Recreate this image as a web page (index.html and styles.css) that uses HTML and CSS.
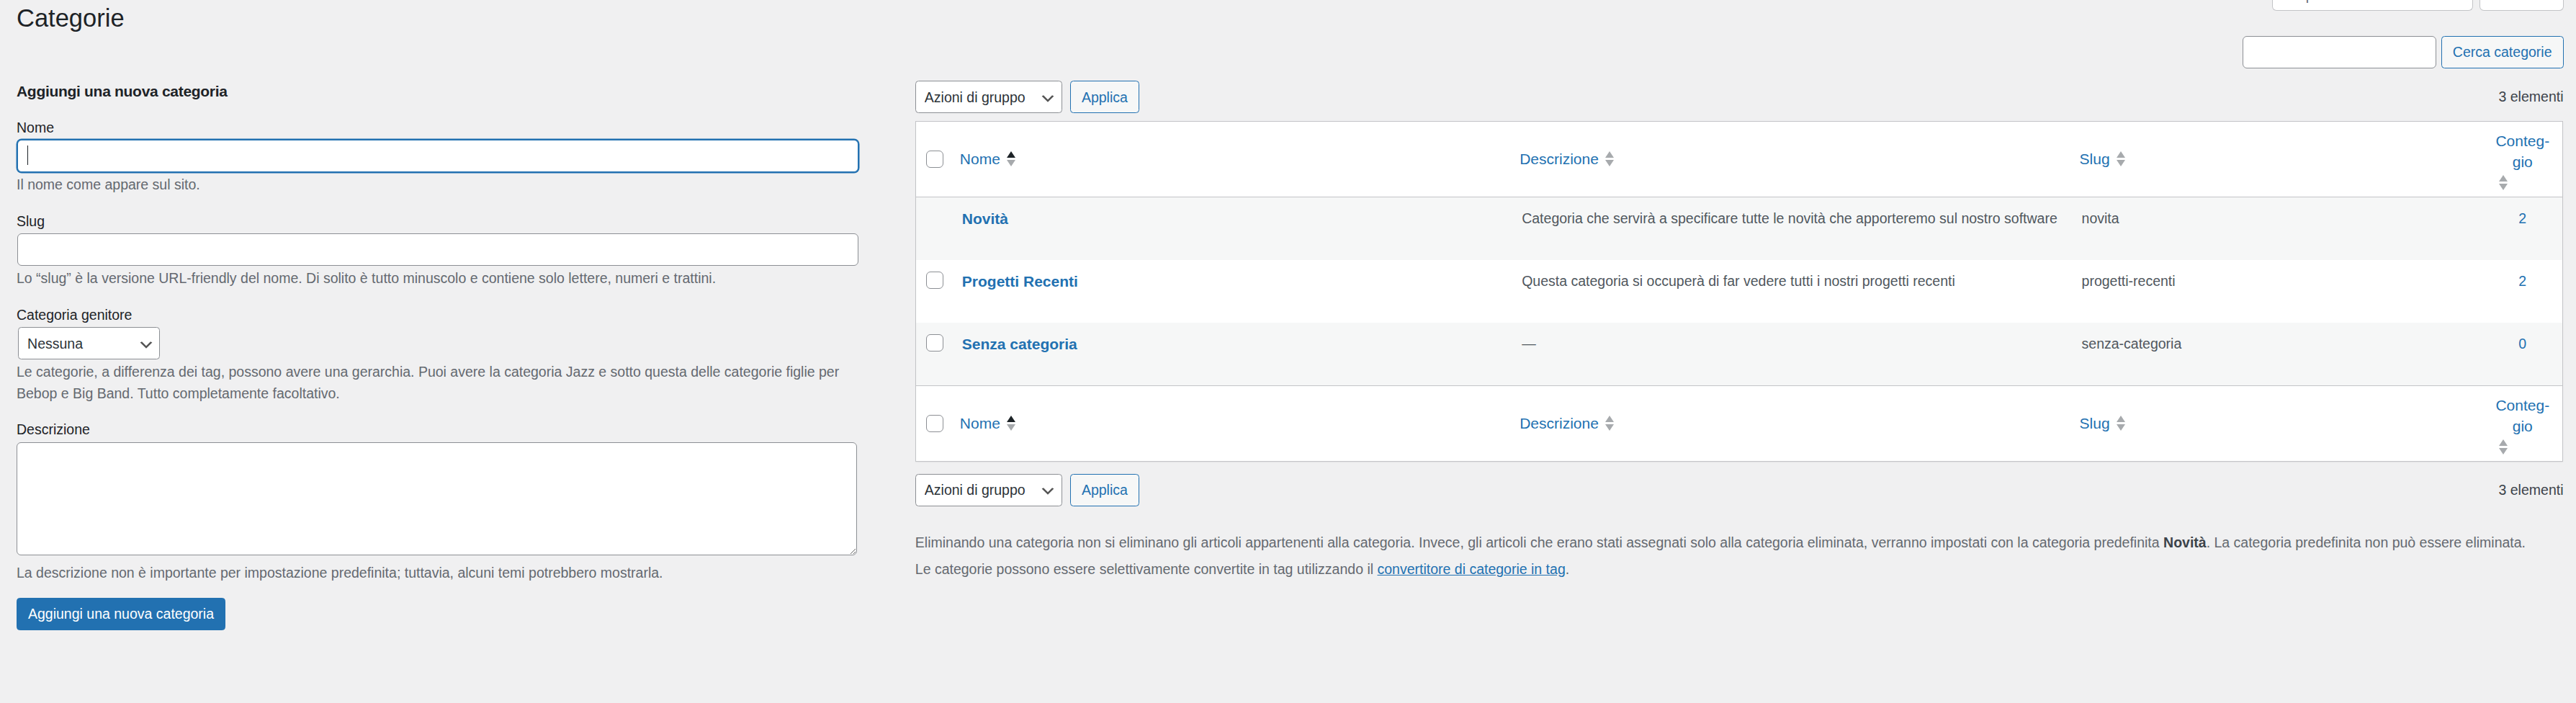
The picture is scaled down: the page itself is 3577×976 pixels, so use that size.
FILE: index.html
```html
<!DOCTYPE html>
<html lang="it">
<head>
<meta charset="utf-8">
<title>Categorie</title>
<link rel="stylesheet" href="styles.css">
</head>
<body>
<div class="wrap">
  <div class="topbar">
    <h1 class="page-title">Categorie</h1>
    <div class="screen-meta">
      <button class="meta-tab" type="button">Impostazioni schermata<span class="meta-arrow"><svg viewBox="0 0 20 20" width="20" height="20"><path d="M5 8l5 5 5-5z" fill="#787c82"/></svg></span></button>
      <button class="meta-tab" type="button">Aiuto<span class="meta-arrow"><svg viewBox="0 0 20 20" width="20" height="20"><path d="M5 8l5 5 5-5z" fill="#787c82"/></svg></span></button>
    </div>
  </div>

  <div class="search-box">
    <input class="text-input search-input" type="search" aria-label="Cerca categorie">
    <button class="btn btn-secondary" type="button">Cerca categorie</button>
  </div>

  <div class="cols">
    <div class="col-left">
      <h2 class="form-title">Aggiungi una nuova categoria</h2>

      <div class="form-field">
        <label class="field-label">Nome</label>
        <div class="field-control">
          <input class="text-input wide-input is-focused" type="text">
          <span class="caret"></span>
        </div>
        <p class="hint">Il nome come appare sul sito.</p>
      </div>

      <div class="form-field">
        <label class="field-label">Slug</label>
        <div class="field-control">
          <input class="text-input wide-input" type="text">
        </div>
        <p class="hint">Lo “slug” è la versione URL-friendly del nome. Di solito è tutto minuscolo e contiene solo lettere, numeri e trattini.</p>
      </div>

      <div class="form-field">
        <label class="field-label">Categoria genitore</label>
        <div class="select-wrap parent-select">
          <select class="select">
            <option>Nessuna</option>
            <option>Novità</option>
            <option>Progetti Recenti</option>
            <option>Senza categoria</option>
          </select>
          <svg class="chevron" viewBox="0 0 20 20" width="16" height="16"><path d="M5 6l5 5 5-5 2 1-7 7-7-7 2-1z" fill="#555"/></svg>
        </div>
        <p class="hint">Le categorie, a differenza dei tag, possono avere una gerarchia. Puoi avere la categoria Jazz e sotto questa delle categorie figlie per Bebop e Big Band. Tutto completamente facoltativo.</p>
      </div>

      <div class="form-field">
        <label class="field-label">Descrizione</label>
        <textarea class="textarea" rows="5"></textarea>
        <p class="hint hint-after-area">La descrizione non è importante per impostazione predefinita; tuttavia, alcuni temi potrebbero mostrarla.</p>
      </div>

      <div class="submit">
        <button class="btn btn-primary" type="button">Aggiungi una nuova categoria</button>
      </div>
    </div>

    <div class="col-right">
      <div class="tablenav tablenav-top">
        <div class="bulk">
          <div class="select-wrap bulk-select">
            <select class="select">
              <option>Azioni di gruppo</option>
              <option>Elimina</option>
            </select>
            <svg class="chevron" viewBox="0 0 20 20" width="16" height="16"><path d="M5 6l5 5 5-5 2 1-7 7-7-7 2-1z" fill="#555"/></svg>
          </div>
          <button class="btn btn-secondary" type="button">Applica</button>
        </div>
        <span class="displaying-num">3 elementi</span>
      </div>

      <table class="list-table">
        <colgroup>
          <col class="c-check">
          <col>
          <col>
          <col class="c-slug">
          <col class="c-posts">
        </colgroup>
        <thead>
          <tr>
            <td class="check-col"><input class="cb" type="checkbox" aria-label="Seleziona tutto"></td>
            <th class="head-cell"><a class="sort-link" href="#"><span>Nome</span><span class="sort-ind"><span class="tri-up is-active"></span><span class="tri-down"></span></span></a></th>
            <th class="head-cell"><a class="sort-link" href="#"><span>Descrizione</span><span class="sort-ind"><span class="tri-up"></span><span class="tri-down"></span></span></a></th>
            <th class="head-cell"><a class="sort-link" href="#"><span>Slug</span><span class="sort-ind"><span class="tri-up"></span><span class="tri-down"></span></span></a></th>
            <th class="head-cell"><a class="sort-link sort-link-stack" href="#"><span>Conteg&shy;gio</span><span class="sort-ind sort-ind-block"><span class="tri-up"></span><span class="tri-down"></span></span></a></th>
          </tr>
        </thead>
        <tbody>
          <tr class="alt">
            <th class="check-col"></th>
            <td><a class="row-title" href="#">Novità</a></td>
            <td>Categoria che servirà a specificare tutte le novità che apporteremo sul nostro software</td>
            <td>novita</td>
            <td class="count"><a href="#">2</a></td>
          </tr>
          <tr>
            <th class="check-col"><input class="cb" type="checkbox" aria-label="Seleziona Progetti Recenti"></th>
            <td><a class="row-title" href="#">Progetti Recenti</a></td>
            <td>Questa categoria si occuperà di far vedere tutti i nostri progetti recenti</td>
            <td>progetti-recenti</td>
            <td class="count"><a href="#">2</a></td>
          </tr>
          <tr class="alt">
            <th class="check-col"><input class="cb" type="checkbox" aria-label="Seleziona Senza categoria"></th>
            <td><a class="row-title" href="#">Senza categoria</a></td>
            <td><span aria-hidden="true">—</span></td>
            <td>senza-categoria</td>
            <td class="count"><a href="#">0</a></td>
          </tr>
        </tbody>
        <tfoot>
          <tr>
            <td class="check-col"><input class="cb" type="checkbox" aria-label="Seleziona tutto"></td>
            <th class="head-cell"><a class="sort-link" href="#"><span>Nome</span><span class="sort-ind"><span class="tri-up is-active"></span><span class="tri-down"></span></span></a></th>
            <th class="head-cell"><a class="sort-link" href="#"><span>Descrizione</span><span class="sort-ind"><span class="tri-up"></span><span class="tri-down"></span></span></a></th>
            <th class="head-cell"><a class="sort-link" href="#"><span>Slug</span><span class="sort-ind"><span class="tri-up"></span><span class="tri-down"></span></span></a></th>
            <th class="head-cell"><a class="sort-link sort-link-stack" href="#"><span>Conteg&shy;gio</span><span class="sort-ind sort-ind-block"><span class="tri-up"></span><span class="tri-down"></span></span></a></th>
          </tr>
        </tfoot>
      </table>

      <div class="tablenav tablenav-bottom">
        <div class="bulk">
          <div class="select-wrap bulk-select">
            <select class="select">
              <option>Azioni di gruppo</option>
              <option>Elimina</option>
            </select>
            <svg class="chevron" viewBox="0 0 20 20" width="16" height="16"><path d="M5 6l5 5 5-5 2 1-7 7-7-7 2-1z" fill="#555"/></svg>
          </div>
          <button class="btn btn-secondary" type="button">Applica</button>
        </div>
        <span class="displaying-num">3 elementi</span>
      </div>

      <div class="term-notes">
        <p>Eliminando una categoria non si eliminano gli articoli appartenenti alla categoria. Invece, gli articoli che erano stati assegnati solo alla categoria eliminata, verranno impostati con la categoria predefinita <strong>Novità</strong>. La categoria predefinita non può essere eliminata.</p>
        <p>Le categorie possono essere selettivamente convertite in tag utilizzando il <a class="text-link" href="#">convertitore di categorie in tag</a>.</p>
      </div>
    </div>
  </div>
</div>
</body>
</html>
```

FILE: styles.css
```css
html {
  background: #f0f0f1;
}

body {
  margin: 0;
  background: #f0f0f1;
}

.wrap {
  zoom: 1.5;
  padding: 0 11.67px 0 15.33px;
  font-family: "Liberation Sans", Arial, sans-serif;
  font-size: 13px;
  line-height: 1.4em;
  color: #3c434a;
}

/* ---------- top bar ---------- */
.topbar {
  display: flex;
  justify-content: space-between;
  align-items: flex-start;
}

.page-title {
  margin: 0;
  padding: 1.8px 0 0;
  font-size: 23px;
  font-weight: 400;
  line-height: 29.9px;
  color: #1d2327;
}

.screen-meta {
  display: flex;
  gap: 6px;
  margin-top: -18.5px;
}

.meta-tab {
  display: block;
  padding: 3px 6px 3px 16px;
  border: 1px solid #c3c4c7;
  border-top: 0;
  border-radius: 0 0 4px 4px;
  background: #fff;
  color: #646970;
  font-family: inherit;
  font-size: 13px;
  line-height: 22.1px;
  white-space: nowrap;
}

.meta-arrow {
  display: inline-block;
  width: 20px;
  height: 20px;
  padding-right: 5px;
  vertical-align: bottom;
  position: relative;
  bottom: 2px;
}

.meta-arrow svg {
  display: block;
}

/* ---------- search ---------- */
.search-box {
  display: flex;
  justify-content: flex-end;
  align-items: center;
  gap: 3.7px;
  margin-top: 1.6px;
}

.search-input {
  width: 179.3px;
}

/* ---------- form controls ---------- */
.text-input {
  display: block;
  box-sizing: border-box;
  height: 30px;
  margin: 0 1px;
  padding: 0 8px;
  border: 1px solid #8c8f94;
  border-radius: 4px;
  background: #fff;
  color: #2c3338;
  font-family: inherit;
  font-size: 13px;
  line-height: 2;
  outline: none;
}

.text-input.is-focused {
  border-color: #2271b1;
  box-shadow: 0 0 0 1px #2271b1;
}

.wide-input {
  width: 95%;
}

.field-control {
  position: relative;
}

.caret {
  position: absolute;
  left: 10px;
  top: 5.5px;
  width: 1px;
  height: 18px;
  background: #1d2327;
}

.select-wrap {
  position: relative;
}

.select {
  display: block;
  box-sizing: border-box;
  width: 100%;
  height: 30px;
  margin: 0;
  padding: 0 24px 0 8px;
  border: 1px solid #8c8f94;
  border-radius: 3px;
  background: #fff;
  color: #2c3338;
  font-family: inherit;
  font-size: 13px;
  line-height: 28px;
  -webkit-appearance: none;
  appearance: none;
  outline: none;
}

.chevron {
  position: absolute;
  right: 5px;
  top: 8.5px;
  pointer-events: none;
}

.parent-select {
  width: 131.3px;
  margin-left: 1.4px;
}

.bulk-select {
  width: 136px;
}

.textarea {
  display: block;
  box-sizing: border-box;
  width: 95%;
  height: 105px;
  margin: 0;
  padding: 2px 6px;
  border: 1px solid #8c8f94;
  border-radius: 4px;
  background: #fff;
  font-family: inherit;
  font-size: 13px;
  resize: vertical;
}

.btn {
  display: inline-block;
  box-sizing: border-box;
  height: 30px;
  margin: 0;
  padding: 0 10px;
  border: 1px solid;
  border-radius: 3px;
  font-family: inherit;
  font-size: 13px;
  line-height: 28px;
  white-space: nowrap;
  cursor: pointer;
}

.btn-primary {
  background: #2271b1;
  border-color: #2271b1;
  color: #fff;
}

.btn-secondary {
  background: #f6f7f7;
  border-color: #2271b1;
  color: #2271b1;
}

/* ---------- columns ---------- */
.cols {
  display: flex;
  align-items: flex-start;
  margin-top: 11.4px;
}

.col-left {
  flex: 0 0 35%;
  box-sizing: border-box;
  padding-right: 6px;
}

.col-right {
  flex: 1 1 auto;
  min-width: 0;
  padding-left: 6.7px;
}

.form-title {
  margin: 0;
  font-size: 14px;
  font-weight: 700;
  letter-spacing: -0.2px;
  line-height: 19.6px;
  color: #1d2327;
}

.form-field {
  margin: 13px 0;
}

.field-label {
  display: block;
  padding: 2px 0;
  line-height: 18.2px;
  color: #1d2327;
}

.hint {
  max-width: 95%;
  margin: 2px 0 5px;
  line-height: 19.5px;
  color: #646970;
}

.hint-after-area {
  margin-top: 6.5px;
}

.submit {
  margin: 0;
}

/* ---------- table nav ---------- */
.tablenav {
  display: flex;
  align-items: center;
  height: 30px;
}

.tablenav-top {
  margin-bottom: 7.3px;
}

.tablenav-bottom {
  margin-top: 11.4px;
}

.bulk {
  display: flex;
  gap: 7.4px;
}

.displaying-num {
  margin-left: auto;
  color: #3c434a;
}

/* ---------- list table ---------- */
.list-table {
  width: 100%;
  table-layout: fixed;
  border-collapse: separate;
  border-spacing: 0;
  border: 1px solid #c3c4c7;
  background: #fff;
  box-shadow: 0 1px 1px rgba(0, 0, 0, 0.04);
}

.c-check {
  width: 32.7px;
}

.c-slug {
  width: 381px;
}

.c-posts {
  width: 74.3px;
}

.list-table thead td,
.list-table thead th {
  border-bottom: 1px solid #c3c4c7;
}

.list-table tfoot td,
.list-table tfoot th {
  border-top: 1px solid #c3c4c7;
}

.head-cell {
  padding: 0;
  vertical-align: middle;
  text-align: left;
  font-weight: 400;
  font-size: 14px;
  line-height: 19.6px;
}

.list-table thead .check-col,
.list-table tfoot .check-col {
  padding: 0 0 0 9.5px;
  vertical-align: middle;
}

.cb {
  display: block;
  box-sizing: border-box;
  width: 16px;
  height: 16px;
  margin: 0;
  border: 1px solid #8c8f94;
  border-radius: 4px;
  background: #fff;
  -webkit-appearance: none;
  appearance: none;
}

.sort-link {
  display: flex;
  align-items: center;
  padding: 8px;
  color: #2271b1;
  text-decoration: none;
}

.sort-link-stack {
  display: block;
  padding: 8px 8px 6px;
  text-align: center;
  hyphens: manual;
}

.sort-ind {
  display: flex;
  flex-direction: column;
  gap: 2px;
  width: 8px;
  margin-left: 6px;
}

.sort-ind-block {
  margin: 2px 0 0 7px;
}

.tri-up {
  width: 0;
  height: 0;
  border-left: 4px solid transparent;
  border-right: 4px solid transparent;
  border-bottom: 6px solid #a7aaad;
}

.tri-down {
  width: 0;
  height: 0;
  border-left: 4px solid transparent;
  border-right: 4px solid transparent;
  border-top: 6px solid #a7aaad;
}

.tri-up.is-active {
  border-bottom-color: #1d2327;
}

.list-table tbody tr {
  height: 58px;
}

.list-table tbody tr.alt {
  background: #f6f7f7;
}

.list-table tbody td {
  padding: 10px 10px 8px;
  vertical-align: top;
  font-size: 13px;
  line-height: 19.5px;
  color: #50575e;
  overflow-wrap: break-word;
}

.list-table tbody .check-col {
  padding: 10.7px 0 0 9.5px;
  vertical-align: top;
}

.row-title {
  font-size: 14px;
  font-weight: 700;
  color: #2271b1;
  text-decoration: none;
}

.count {
  text-align: center;
}

.count a {
  color: #2271b1;
  text-decoration: none;
}

/* ---------- notes ---------- */
.term-notes {
  margin-top: 24.5px;
}

.term-notes p {
  margin: 2px 0 5px;
  line-height: 19.5px;
  color: #646970;
}

.term-notes strong {
  color: #3c434a;
}

.text-link {
  color: #2271b1;
  text-decoration: underline;
}
```
